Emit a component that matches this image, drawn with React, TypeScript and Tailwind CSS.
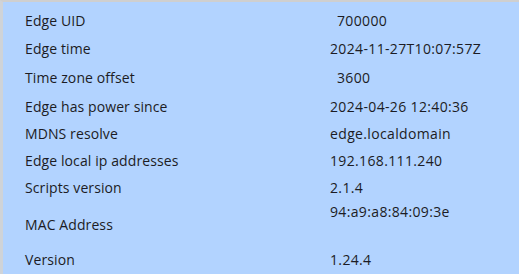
import React from "react";

type Row = { label: string; value: string; h: string; indent?: boolean; mac?: boolean };

const rows: Row[] = [
  { label: "Edge UID", value: "700000", h: "h-[28px]", indent: true },
  { label: "Edge time", value: "2024-11-27T10:07:57Z", h: "h-[29px]" },
  { label: "Time zone offset", value: "3600", h: "h-[29px]", indent: true },
  { label: "Edge has power since", value: "2024-04-26 12:40:36", h: "h-[28px]" },
  { label: "MDNS resolve", value: "edge.localdomain", h: "h-[26px]" },
  { label: "Edge local ip addresses", value: "192.168.111.240", h: "h-[28px]" },
  { label: "Scripts version", value: "2.1.4", h: "h-[26px]" },
  { label: "MAC Address", value: "94:a9:a8:84:09:3e", h: "h-[48px]", mac: true },
  { label: "Version", value: "1.24.4", h: "h-[22px]" },
];

export default function App() {
  return (
    <div
      className="w-[519px] h-[274px] bg-[#b2d3ff] border-l-[3px] border-t-2 border-l-[#cfd3d8] border-t-[#cfcfcf] text-[14px] text-[#1c1c24] overflow-hidden pt-[4px]"
      style={{ fontFamily: '"Open Sans", "Liberation Sans", sans-serif' }}
    >
      {rows.map((r) => (
        <div key={r.label} className={`flex ${r.h}`}>
          <div className="w-[327px] pl-[22px] flex items-center tracking-[0.1px]">{r.label}</div>
          {r.mac ? (
            <div className="flex-1 h-[22px] flex items-center tracking-[0.35px]">{r.value}</div>
          ) : (
            <div className={`flex-1 flex items-center tracking-[0.35px] ${r.indent ? "pl-[7px]" : ""}`}>{r.value}</div>
          )}
        </div>
      ))}
    </div>
  );
}
